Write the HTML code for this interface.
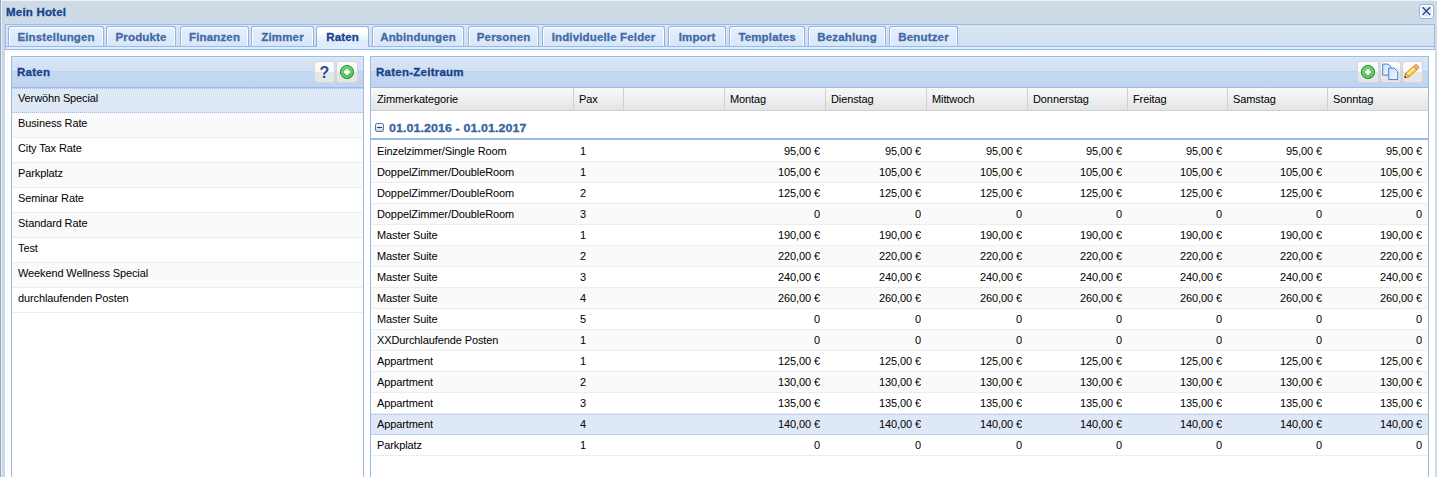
<!DOCTYPE html><html><head><meta charset="utf-8"><style>
*{margin:0;padding:0;box-sizing:border-box}
html,body{width:1437px;height:477px;overflow:hidden;background:#fff}
body{position:relative;font-family:"Liberation Sans",sans-serif;font-size:11px;color:#000}
.a{position:absolute}
#win{left:0;top:0;width:1437px;height:477px;background:#cfdae7}
#wl0{left:0;top:0;width:1px;height:477px;background:#97a8be}
#wl1{left:1px;top:0;width:1px;height:477px;background:#e6edf7}
#wl2{left:2px;top:0;width:3px;height:477px;background:#c9d7e7}
#wt{left:1px;top:0;width:1436px;height:1px;background:#eef2f7}
#title{left:6px;top:5px;font-weight:bold;font-size:11.5px;letter-spacing:0.2px;color:#15428b;line-height:14px}
#close{left:1419px;top:4px;width:15px;height:15px;border:1px solid #92b3e2;border-radius:3px;background:#dce9fa;box-shadow:inset 0 0 0 1.5px #fff}
#strip{left:5px;top:24px;width:1430px;height:26px;border:1px solid #99bbe8;background:linear-gradient(#dae6f4,#d0def0)}
#spacer{left:5px;top:46px;width:1430px;height:4px;border-top:1px solid #99bbe8;border-bottom:1px solid #99bbe8;border-left:1px solid #99bbe8;border-right:1px solid #99bbe8;background:#deecfd}
.tab{top:26px;height:20px;border:1px solid #8db2e3;border-bottom:none;border-radius:3px 3px 0 0;background:linear-gradient(#e6effb,#d8e6f8);box-shadow:inset 1px 1px 0 #fff,inset -1px 0 0 #fff;font-weight:bold;font-size:11.5px;letter-spacing:0.15px;text-indent:0.15px;color:#416aa3;text-align:center;line-height:20px;white-space:nowrap}
.tab.act{background:linear-gradient(#fff 0,#fff 5px,#deecfd 15px,#deecfd 100%);color:#15428b;height:21px;box-shadow:none}
#body{left:5px;top:50px;width:1430px;height:427px;background:#fff}
#rg{left:1435px;top:0;width:2px;height:477px;background:#cfdae7}
.panel{top:56px;height:430px;border:1px solid #99bbe8;background:#fff}
.ph{top:56px;height:32px;border:1px solid #99bbe8;background:linear-gradient(#e2ebf7 0,#e2ebf7 1px,#d9e5f4 1px,#d2e0f3 14px,#bcd1ee 14px,#bcd1ee 15px,#c4d8f1 15px,#bfd4f0 100%)}
.pt{font-weight:bold;font-size:11.5px;letter-spacing:0.25px;color:#15428b;line-height:14px;white-space:nowrap}
.btn{top:61px;width:21px;height:22px;border:1px solid #d6d6d6;border-radius:3px;background:linear-gradient(#fcfcfc 0,#f7f7f7 10px,#e6e6e6 10px,#e6e6e6 100%)}
.btn svg{position:absolute;left:-1px;top:-1px}
.lrow{left:12px;width:351px;height:25px;border-top:1px solid transparent;border-bottom:1px solid #ededed;line-height:18px;padding-left:6px;letter-spacing:-0.12px;white-space:nowrap}
.alt{background:#fafafa}
#gh{left:371px;top:88px;width:1057px;height:23px;background:linear-gradient(#f9f9f9,#e3e4e6);border-bottom:1px solid #d0d0d0}
.hs{top:88px;width:1px;height:22px;background:#d0d0d0}
.hc{top:88px;height:22px;line-height:22px;padding-left:5px;white-space:nowrap;letter-spacing:-0.1px}
#grp{left:371px;top:111px;width:1057px;height:29px;border-bottom:2px solid #99bbe8}
#grpt{left:389px;top:121px;font-weight:bold;font-size:11px;color:#3764a0;letter-spacing:0.1px;line-height:14px;white-space:nowrap;transform:scaleX(1.125);transform-origin:0 0}
#grpi{left:375px;top:123px;width:9px;height:9px;border:1px solid #66788f;border-radius:2px;background:linear-gradient(#fbfcfe,#dde5f0 60%,#c5d1e2);}
#grpi:after{content:"";position:absolute;left:1px;top:3px;width:5px;height:1px;background:#1f3f74}
.grow{left:371px;width:1057px;height:21px;border-bottom:1px solid #ededed}
.gc{height:20px;line-height:20px;white-space:nowrap;letter-spacing:-0.1px;overflow:hidden}
.r{text-align:right}
.pt,#title,.tab,#grpt{-webkit-text-stroke:0.3px currentColor}
.a.sel{background:#dfe8f6;border-top:1px dotted #a3bae9;border-bottom:1px dotted #a3bae9}
</style></head><body><div class="a" id="win"></div><div class="a" id="wl0"></div><div class="a" id="wl1"></div><div class="a" id="wl2"></div><div class="a" id="wt"></div>
<div class="a" id="title">Mein Hotel</div>
<div class="a" id="close"><svg width="13" height="13" style="position:absolute;left:0;top:0"><path d="M2.6 2.3L10.1 9.9M10.1 2.3L2.6 9.9" stroke="#233e7e" stroke-width="1.3"/></svg></div>
<div class="a" id="strip"></div>
<div class="a" id="body"></div><div class="a" id="spacer"></div>
<div class="a tab" style="left:8px;width:96px">Einstellungen</div>
<div class="a tab" style="left:106px;width:70px">Produkte</div>
<div class="a tab" style="left:180px;width:69px">Finanzen</div>
<div class="a tab" style="left:251px;width:63px">Zimmer</div>
<div class="a tab act" style="left:316px;width:53px">Raten</div>
<div class="a tab" style="left:372px;width:92px">Anbindungen</div>
<div class="a tab" style="left:468px;width:71px">Personen</div>
<div class="a tab" style="left:542px;width:123px">Individuelle Felder</div>
<div class="a tab" style="left:668px;width:58px">Import</div>
<div class="a tab" style="left:729px;width:76px">Templates</div>
<div class="a tab" style="left:808px;width:78px">Bezahlung</div>
<div class="a tab" style="left:889px;width:69px">Benutzer</div>
<div class="a panel" style="left:11px;width:353px"></div>
<div class="a ph" style="left:11px;width:353px"></div>
<div class="a pt" style="left:17px;top:65px">Raten</div>
<div class="a btn" style="left:314px"><div class="a" style="left:0;top:3px;width:19px;text-align:center;font-weight:bold;font-size:16px;line-height:16px;color:#2b4b94">?</div></div>
<div class="a btn" style="left:336px;width:22px"><svg width="21" height="22" viewBox="0 0 21 22"><defs><radialGradient id="g336" cx="0.45" cy="0.4" r="0.6"><stop offset="0" stop-color="#6fd172"/><stop offset="0.85" stop-color="#45b94d"/><stop offset="1" stop-color="#2f9d39"/></radialGradient></defs><circle cx="11" cy="11" r="6.6" fill="url(#g336)" stroke="#24902f" stroke-width="0.9"/><circle cx="11" cy="11" r="5.2" fill="none" stroke="#b8ebb5" stroke-width="0.6" opacity="0.75"/><path d="M11 7.9V14.1M7.9 11H14.1" stroke="#fff" stroke-width="2.5"/></svg></div>
<div class="a lrow sel" style="top:88px">Verwöhn Special</div>
<div class="a lrow alt" style="top:113px">Business Rate</div>
<div class="a lrow" style="top:138px">City Tax Rate</div>
<div class="a lrow alt" style="top:163px">Parkplatz</div>
<div class="a lrow" style="top:188px">Seminar Rate</div>
<div class="a lrow alt" style="top:213px">Standard Rate</div>
<div class="a lrow" style="top:238px">Test</div>
<div class="a lrow alt" style="top:263px">Weekend Wellness Special</div>
<div class="a lrow" style="top:288px">durchlaufenden Posten</div>
<div class="a panel" style="left:370px;width:1059px"></div>
<div class="a ph" style="left:370px;width:1059px"></div>
<div class="a pt" style="left:376px;top:65px">Raten-Zeitraum</div>
<div class="a btn" style="left:1357px;width:22px"><svg width="21" height="22" viewBox="0 0 21 22"><defs><radialGradient id="g1357" cx="0.45" cy="0.4" r="0.6"><stop offset="0" stop-color="#6fd172"/><stop offset="0.85" stop-color="#45b94d"/><stop offset="1" stop-color="#2f9d39"/></radialGradient></defs><circle cx="11" cy="11" r="6.6" fill="url(#g1357)" stroke="#24902f" stroke-width="0.9"/><circle cx="11" cy="11" r="5.2" fill="none" stroke="#b8ebb5" stroke-width="0.6" opacity="0.75"/><path d="M11 7.9V14.1M7.9 11H14.1" stroke="#fff" stroke-width="2.5"/></svg></div>
<div class="a btn" style="left:1380px"><svg width="21" height="22" viewBox="0 0 21 22"><defs><linearGradient id="cp" x1="0" y1="0" x2="1" y2="1"><stop offset="0" stop-color="#d3e4fb"/><stop offset="1" stop-color="#eef5ff"/></linearGradient></defs><g transform="translate(-0.8,-0.4)"><path d="M3.5 3.5H9L12.5 7V14.5H3.5Z" fill="url(#cp)" stroke="#4a7cd4" stroke-width="1"/><path d="M9.5 7.5H15L18.5 11V19H9.5Z" fill="url(#cp)" stroke="#4a7cd4" stroke-width="1"/></g></svg></div>
<div class="a btn" style="left:1402px"><svg width="21" height="22" viewBox="0 0 21 22"><g transform="translate(9.2,10.7) rotate(-42)"><path d="M-9 0L-5 -2.4V2.4Z" fill="#f6dcae" stroke="#a8641a" stroke-width="0.8"/><path d="M-9.2 0L-7.3 -1.1V1.1Z" fill="#3a2208"/><rect x="-5" y="-2.4" width="10.5" height="4.8" fill="#f7d646" stroke="#c9891a" stroke-width="0.9"/><path d="M-4.8 -0.6H5.3" stroke="#fff3a8" stroke-width="1"/><rect x="5.5" y="-2.4" width="3.2" height="4.8" rx="1.2" fill="#f2b88a" stroke="#c9891a" stroke-width="0.9"/></g></svg></div>
<div class="a" id="gh"></div>
<div class="a hs" style="left:573px"></div>
<div class="a hs" style="left:623px"></div>
<div class="a hs" style="left:724px"></div>
<div class="a hs" style="left:825px"></div>
<div class="a hs" style="left:926px"></div>
<div class="a hs" style="left:1027px"></div>
<div class="a hs" style="left:1127px"></div>
<div class="a hs" style="left:1227px"></div>
<div class="a hs" style="left:1327px"></div>
<div class="a hc" style="left:372px">Zimmerkategorie</div>
<div class="a hc" style="left:574px">Pax</div>
<div class="a hc" style="left:725px">Montag</div>
<div class="a hc" style="left:826px">Dienstag</div>
<div class="a hc" style="left:927px">Mittwoch</div>
<div class="a hc" style="left:1028px">Donnerstag</div>
<div class="a hc" style="left:1128px">Freitag</div>
<div class="a hc" style="left:1228px">Samstag</div>
<div class="a hc" style="left:1328px">Sonntag</div>
<div class="a" id="grp"></div><div class="a" id="grpi"></div><div class="a" id="grpt">01.01.2016 - 01.01.2017</div>
<div class="a grow" style="top:141px"></div>
<div class="a gc" style="left:377px;top:141px">Einzelzimmer/Single Room</div>
<div class="a gc" style="left:580px;top:141px">1</div>
<div class="a gc r" style="left:725px;width:95px;top:141px">95,00 €</div>
<div class="a gc r" style="left:826px;width:95px;top:141px">95,00 €</div>
<div class="a gc r" style="left:927px;width:95px;top:141px">95,00 €</div>
<div class="a gc r" style="left:1028px;width:94px;top:141px">95,00 €</div>
<div class="a gc r" style="left:1128px;width:94px;top:141px">95,00 €</div>
<div class="a gc r" style="left:1228px;width:94px;top:141px">95,00 €</div>
<div class="a gc r" style="left:1328px;width:94px;top:141px">95,00 €</div>
<div class="a grow alt" style="top:162px"></div>
<div class="a gc" style="left:377px;top:162px">DoppelZimmer/DoubleRoom</div>
<div class="a gc" style="left:580px;top:162px">1</div>
<div class="a gc r" style="left:725px;width:95px;top:162px">105,00 €</div>
<div class="a gc r" style="left:826px;width:95px;top:162px">105,00 €</div>
<div class="a gc r" style="left:927px;width:95px;top:162px">105,00 €</div>
<div class="a gc r" style="left:1028px;width:94px;top:162px">105,00 €</div>
<div class="a gc r" style="left:1128px;width:94px;top:162px">105,00 €</div>
<div class="a gc r" style="left:1228px;width:94px;top:162px">105,00 €</div>
<div class="a gc r" style="left:1328px;width:94px;top:162px">105,00 €</div>
<div class="a grow" style="top:183px"></div>
<div class="a gc" style="left:377px;top:183px">DoppelZimmer/DoubleRoom</div>
<div class="a gc" style="left:580px;top:183px">2</div>
<div class="a gc r" style="left:725px;width:95px;top:183px">125,00 €</div>
<div class="a gc r" style="left:826px;width:95px;top:183px">125,00 €</div>
<div class="a gc r" style="left:927px;width:95px;top:183px">125,00 €</div>
<div class="a gc r" style="left:1028px;width:94px;top:183px">125,00 €</div>
<div class="a gc r" style="left:1128px;width:94px;top:183px">125,00 €</div>
<div class="a gc r" style="left:1228px;width:94px;top:183px">125,00 €</div>
<div class="a gc r" style="left:1328px;width:94px;top:183px">125,00 €</div>
<div class="a grow alt" style="top:204px"></div>
<div class="a gc" style="left:377px;top:204px">DoppelZimmer/DoubleRoom</div>
<div class="a gc" style="left:580px;top:204px">3</div>
<div class="a gc r" style="left:725px;width:95px;top:204px">0</div>
<div class="a gc r" style="left:826px;width:95px;top:204px">0</div>
<div class="a gc r" style="left:927px;width:95px;top:204px">0</div>
<div class="a gc r" style="left:1028px;width:94px;top:204px">0</div>
<div class="a gc r" style="left:1128px;width:94px;top:204px">0</div>
<div class="a gc r" style="left:1228px;width:94px;top:204px">0</div>
<div class="a gc r" style="left:1328px;width:94px;top:204px">0</div>
<div class="a grow" style="top:225px"></div>
<div class="a gc" style="left:377px;top:225px">Master Suite</div>
<div class="a gc" style="left:580px;top:225px">1</div>
<div class="a gc r" style="left:725px;width:95px;top:225px">190,00 €</div>
<div class="a gc r" style="left:826px;width:95px;top:225px">190,00 €</div>
<div class="a gc r" style="left:927px;width:95px;top:225px">190,00 €</div>
<div class="a gc r" style="left:1028px;width:94px;top:225px">190,00 €</div>
<div class="a gc r" style="left:1128px;width:94px;top:225px">190,00 €</div>
<div class="a gc r" style="left:1228px;width:94px;top:225px">190,00 €</div>
<div class="a gc r" style="left:1328px;width:94px;top:225px">190,00 €</div>
<div class="a grow alt" style="top:246px"></div>
<div class="a gc" style="left:377px;top:246px">Master Suite</div>
<div class="a gc" style="left:580px;top:246px">2</div>
<div class="a gc r" style="left:725px;width:95px;top:246px">220,00 €</div>
<div class="a gc r" style="left:826px;width:95px;top:246px">220,00 €</div>
<div class="a gc r" style="left:927px;width:95px;top:246px">220,00 €</div>
<div class="a gc r" style="left:1028px;width:94px;top:246px">220,00 €</div>
<div class="a gc r" style="left:1128px;width:94px;top:246px">220,00 €</div>
<div class="a gc r" style="left:1228px;width:94px;top:246px">220,00 €</div>
<div class="a gc r" style="left:1328px;width:94px;top:246px">220,00 €</div>
<div class="a grow" style="top:267px"></div>
<div class="a gc" style="left:377px;top:267px">Master Suite</div>
<div class="a gc" style="left:580px;top:267px">3</div>
<div class="a gc r" style="left:725px;width:95px;top:267px">240,00 €</div>
<div class="a gc r" style="left:826px;width:95px;top:267px">240,00 €</div>
<div class="a gc r" style="left:927px;width:95px;top:267px">240,00 €</div>
<div class="a gc r" style="left:1028px;width:94px;top:267px">240,00 €</div>
<div class="a gc r" style="left:1128px;width:94px;top:267px">240,00 €</div>
<div class="a gc r" style="left:1228px;width:94px;top:267px">240,00 €</div>
<div class="a gc r" style="left:1328px;width:94px;top:267px">240,00 €</div>
<div class="a grow alt" style="top:288px"></div>
<div class="a gc" style="left:377px;top:288px">Master Suite</div>
<div class="a gc" style="left:580px;top:288px">4</div>
<div class="a gc r" style="left:725px;width:95px;top:288px">260,00 €</div>
<div class="a gc r" style="left:826px;width:95px;top:288px">260,00 €</div>
<div class="a gc r" style="left:927px;width:95px;top:288px">260,00 €</div>
<div class="a gc r" style="left:1028px;width:94px;top:288px">260,00 €</div>
<div class="a gc r" style="left:1128px;width:94px;top:288px">260,00 €</div>
<div class="a gc r" style="left:1228px;width:94px;top:288px">260,00 €</div>
<div class="a gc r" style="left:1328px;width:94px;top:288px">260,00 €</div>
<div class="a grow" style="top:309px"></div>
<div class="a gc" style="left:377px;top:309px">Master Suite</div>
<div class="a gc" style="left:580px;top:309px">5</div>
<div class="a gc r" style="left:725px;width:95px;top:309px">0</div>
<div class="a gc r" style="left:826px;width:95px;top:309px">0</div>
<div class="a gc r" style="left:927px;width:95px;top:309px">0</div>
<div class="a gc r" style="left:1028px;width:94px;top:309px">0</div>
<div class="a gc r" style="left:1128px;width:94px;top:309px">0</div>
<div class="a gc r" style="left:1228px;width:94px;top:309px">0</div>
<div class="a gc r" style="left:1328px;width:94px;top:309px">0</div>
<div class="a grow alt" style="top:330px"></div>
<div class="a gc" style="left:377px;top:330px">XXDurchlaufende Posten</div>
<div class="a gc" style="left:580px;top:330px">1</div>
<div class="a gc r" style="left:725px;width:95px;top:330px">0</div>
<div class="a gc r" style="left:826px;width:95px;top:330px">0</div>
<div class="a gc r" style="left:927px;width:95px;top:330px">0</div>
<div class="a gc r" style="left:1028px;width:94px;top:330px">0</div>
<div class="a gc r" style="left:1128px;width:94px;top:330px">0</div>
<div class="a gc r" style="left:1228px;width:94px;top:330px">0</div>
<div class="a gc r" style="left:1328px;width:94px;top:330px">0</div>
<div class="a grow" style="top:351px"></div>
<div class="a gc" style="left:377px;top:351px">Appartment</div>
<div class="a gc" style="left:580px;top:351px">1</div>
<div class="a gc r" style="left:725px;width:95px;top:351px">125,00 €</div>
<div class="a gc r" style="left:826px;width:95px;top:351px">125,00 €</div>
<div class="a gc r" style="left:927px;width:95px;top:351px">125,00 €</div>
<div class="a gc r" style="left:1028px;width:94px;top:351px">125,00 €</div>
<div class="a gc r" style="left:1128px;width:94px;top:351px">125,00 €</div>
<div class="a gc r" style="left:1228px;width:94px;top:351px">125,00 €</div>
<div class="a gc r" style="left:1328px;width:94px;top:351px">125,00 €</div>
<div class="a grow alt" style="top:372px"></div>
<div class="a gc" style="left:377px;top:372px">Appartment</div>
<div class="a gc" style="left:580px;top:372px">2</div>
<div class="a gc r" style="left:725px;width:95px;top:372px">130,00 €</div>
<div class="a gc r" style="left:826px;width:95px;top:372px">130,00 €</div>
<div class="a gc r" style="left:927px;width:95px;top:372px">130,00 €</div>
<div class="a gc r" style="left:1028px;width:94px;top:372px">130,00 €</div>
<div class="a gc r" style="left:1128px;width:94px;top:372px">130,00 €</div>
<div class="a gc r" style="left:1228px;width:94px;top:372px">130,00 €</div>
<div class="a gc r" style="left:1328px;width:94px;top:372px">130,00 €</div>
<div class="a grow" style="top:393px"></div>
<div class="a gc" style="left:377px;top:393px">Appartment</div>
<div class="a gc" style="left:580px;top:393px">3</div>
<div class="a gc r" style="left:725px;width:95px;top:393px">135,00 €</div>
<div class="a gc r" style="left:826px;width:95px;top:393px">135,00 €</div>
<div class="a gc r" style="left:927px;width:95px;top:393px">135,00 €</div>
<div class="a gc r" style="left:1028px;width:94px;top:393px">135,00 €</div>
<div class="a gc r" style="left:1128px;width:94px;top:393px">135,00 €</div>
<div class="a gc r" style="left:1228px;width:94px;top:393px">135,00 €</div>
<div class="a gc r" style="left:1328px;width:94px;top:393px">135,00 €</div>
<div class="a grow sel" style="top:414px"></div>
<div class="a gc" style="left:377px;top:414px">Appartment</div>
<div class="a gc" style="left:580px;top:414px">4</div>
<div class="a gc r" style="left:725px;width:95px;top:414px">140,00 €</div>
<div class="a gc r" style="left:826px;width:95px;top:414px">140,00 €</div>
<div class="a gc r" style="left:927px;width:95px;top:414px">140,00 €</div>
<div class="a gc r" style="left:1028px;width:94px;top:414px">140,00 €</div>
<div class="a gc r" style="left:1128px;width:94px;top:414px">140,00 €</div>
<div class="a gc r" style="left:1228px;width:94px;top:414px">140,00 €</div>
<div class="a gc r" style="left:1328px;width:94px;top:414px">140,00 €</div>
<div class="a grow" style="top:435px"></div>
<div class="a gc" style="left:377px;top:435px">Parkplatz</div>
<div class="a gc" style="left:580px;top:435px">1</div>
<div class="a gc r" style="left:725px;width:95px;top:435px">0</div>
<div class="a gc r" style="left:826px;width:95px;top:435px">0</div>
<div class="a gc r" style="left:927px;width:95px;top:435px">0</div>
<div class="a gc r" style="left:1028px;width:94px;top:435px">0</div>
<div class="a gc r" style="left:1128px;width:94px;top:435px">0</div>
<div class="a gc r" style="left:1228px;width:94px;top:435px">0</div>
<div class="a gc r" style="left:1328px;width:94px;top:435px">0</div></body></html>
